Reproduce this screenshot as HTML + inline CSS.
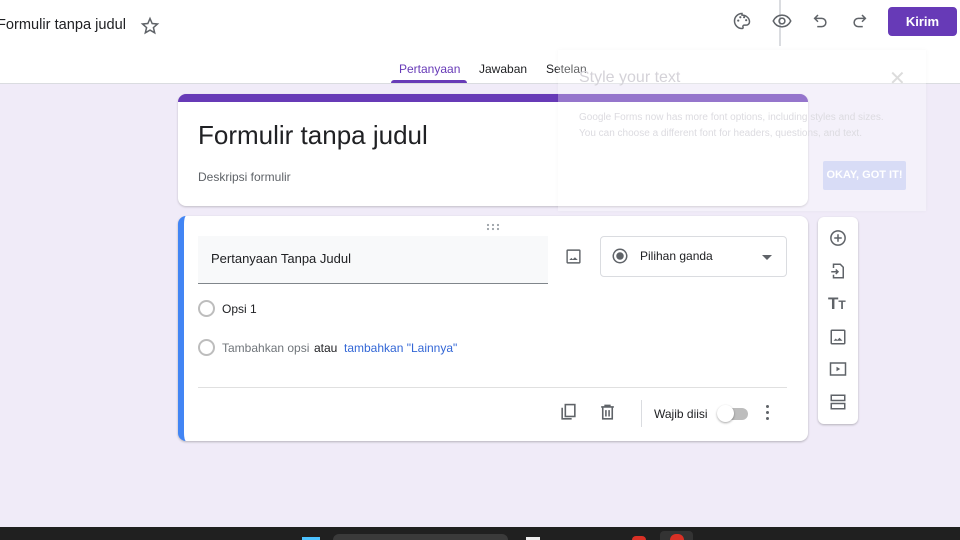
<!DOCTYPE html>
<html><head><meta charset="utf-8"><style>
*{margin:0;padding:0;box-sizing:border-box}
body{width:960px;height:540px;overflow:hidden;background:#f0ebf8;font-family:"Liberation Sans",Arial,sans-serif;position:relative;color:#202124}
.a{position:absolute}
svg{display:block}
</style></head><body>
<div class="a" style="left:0;top:0;width:960px;height:84px;background:#fff;border-bottom:1px solid #dadce0"></div>
<div class="a" style="left:-3px;top:17px;font-size:14.6px;color:#202124">Formulir tanpa judul</div>
<svg class="a" style="left:140px;top:16px" width="20" height="20" viewBox="0 0 24 24"><path d="M12 3l2.6 6 6.4.6-4.9 4.3 1.5 6.3L12 16.9 6.4 20.2l1.5-6.3L3 9.6 9.4 9z" fill="none" stroke="#5f6368" stroke-width="1.8"/></svg>
<div class="a" style="left:779px;top:0;width:2px;height:46px;background:#dadce0"></div>
<svg class="a" style="left:732px;top:11px" width="20" height="20" viewBox="0 0 24 24"><path d="M12 3a9 9 0 000 18c1.2 0 1.6-.8 1.2-1.6-.5-1 .1-2.4 1.5-2.4H17a4 4 0 004-4c0-4.4-4-8-9-8z" fill="none" stroke="#5f6368" stroke-width="1.8"/><circle cx="7.5" cy="11.5" r="1.3" fill="#5f6368"/><circle cx="10" cy="7.5" r="1.3" fill="#5f6368"/><circle cx="14.5" cy="7.5" r="1.3" fill="#5f6368"/><circle cx="17" cy="11" r="1.3" fill="#5f6368"/></svg>
<svg class="a" style="left:771px;top:11px" width="22" height="20" viewBox="0 0 24 24"><path d="M1.5 12C4 7 8 5 12 5s8 2 10.5 7c-2.5 5-6.5 7-10.5 7S4 17 1.5 12z" fill="none" stroke="#5f6368" stroke-width="1.8"/><circle cx="12" cy="12" r="3.5" fill="none" stroke="#5f6368" stroke-width="1.8"/></svg>
<svg class="a" style="left:812px;top:12px" width="18" height="18" viewBox="0 0 24 24"><path d="M8 4L3.5 8.5 8 13M4 8.5h9a5.5 5.5 0 010 11H7" fill="none" stroke="#5f6368" stroke-width="2"/></svg>
<svg class="a" style="left:850px;top:12px" width="18" height="18" viewBox="0 0 24 24"><path d="M16 4l4.5 4.5L16 13M20 8.5h-9a5.5 5.5 0 000 11h6" fill="none" stroke="#5f6368" stroke-width="2"/></svg>
<div class="a" style="left:888px;top:7px;width:69px;height:29px;background:#673ab7;border-radius:4px;color:#fff;font-size:13px;font-weight:bold;text-align:center;line-height:29px">Kirim</div>
<div class="a" style="left:399px;top:62px;font-size:12px;color:#673ab7">Pertanyaan</div>
<div class="a" style="left:391px;top:80px;width:76px;height:3px;background:#673ab7;border-radius:3px 3px 0 0"></div>
<div class="a" style="left:479px;top:62px;font-size:12px;color:#202124">Jawaban</div>
<div class="a" style="left:546px;top:62px;font-size:12px;color:#202124">Setelan</div>

<div class="a" style="left:178px;top:94px;width:630px;height:112px;background:#fff;border-radius:8px;border-top:8px solid #673ab7;box-shadow:0 1px 2px rgba(0,0,0,.2)"></div>
<div class="a" style="left:198px;top:120px;font-size:26px;color:#202124">Formulir tanpa judul</div>
<div class="a" style="left:198px;top:170px;font-size:12px;color:#5f6368">Deskripsi formulir</div>

<div class="a" style="left:178px;top:216px;width:630px;height:225px;background:#fff;border-radius:8px;box-shadow:0 1px 2px rgba(0,0,0,.25);border-left:6px solid #4285f4"></div>
<svg class="a" style="left:486px;top:223px" width="14" height="8"><g fill="#9aa0a6"><circle cx="2" cy="2" r="1.1"/><circle cx="7" cy="2" r="1.1"/><circle cx="12" cy="2" r="1.1"/><circle cx="2" cy="6" r="1.1"/><circle cx="7" cy="6" r="1.1"/><circle cx="12" cy="6" r="1.1"/></g></svg>
<div class="a" style="left:198px;top:236px;width:350px;height:48px;background:#f8f9fa;border-bottom:1px solid #80868b"></div>
<div class="a" style="left:211px;top:251px;font-size:13px;color:#202124">Pertanyaan Tanpa Judul</div>
<svg class="a" style="left:565px;top:248px" width="17" height="17" viewBox="0 0 24 24"><rect x="3" y="3" width="18" height="18" rx="1" fill="none" stroke="#5f6368" stroke-width="2"/><path d="M6 17l3-3 2 2 3-3 4 4z" fill="#5f6368"/></svg>
<div class="a" style="left:600px;top:236px;width:187px;height:41px;border:1px solid #dadce0;border-radius:4px"></div>
<svg class="a" style="left:611px;top:247px" width="18" height="18" viewBox="0 0 24 24"><circle cx="12" cy="12" r="9" fill="none" stroke="#5f6368" stroke-width="2"/><circle cx="12" cy="12" r="5" fill="#5f6368"/></svg>
<div class="a" style="left:640px;top:249px;font-size:12px;color:#202124">Pilihan ganda</div>
<div class="a" style="left:762px;top:255px;width:0;height:0;border-left:5px solid transparent;border-right:5px solid transparent;border-top:5px solid #5f6368"></div>

<div class="a" style="left:198px;top:300px;width:17px;height:17px;border:2px solid #bdbdbd;border-radius:50%"></div>
<div class="a" style="left:222px;top:302px;font-size:12px;color:#202124">Opsi 1</div>
<div class="a" style="left:198px;top:339px;width:17px;height:17px;border:2px solid #bdbdbd;border-radius:50%"></div>
<div class="a" style="left:222px;top:341px;font-size:12px;color:#70757a">Tambahkan opsi</div>
<div class="a" style="left:314px;top:341px;font-size:12px;color:#202124">atau</div>
<div class="a" style="left:344px;top:341px;font-size:12px;color:#3367d6">tambahkan "Lainnya"</div>

<div class="a" style="left:198px;top:387px;width:589px;height:1px;background:#e0e0e0"></div>
<svg class="a" style="left:559px;top:403px" width="19" height="19" viewBox="0 0 24 24"><path d="M4 6v14h12" fill="none" stroke="#5f6368" stroke-width="2"/><rect x="8" y="2" width="12" height="15" fill="none" stroke="#5f6368" stroke-width="2"/></svg>
<svg class="a" style="left:598px;top:403px" width="19" height="19" viewBox="0 0 24 24"><path d="M4 5h16M9 5V3h6v2M6 5v15h12V5M10 9v8M14 9v8" fill="none" stroke="#5f6368" stroke-width="2"/></svg>
<div class="a" style="left:641px;top:400px;width:1px;height:27px;background:#dadce0"></div>
<div class="a" style="left:654px;top:407px;font-size:12px;color:#202124">Wajib diisi</div>
<div class="a" style="left:722px;top:408px;width:26px;height:12px;border-radius:6px;background:#bdbdbd"></div>
<div class="a" style="left:717px;top:405px;width:17px;height:17px;border-radius:50%;background:#fff;box-shadow:0 1px 2px rgba(0,0,0,.35)"></div>
<div class="a" style="left:766px;top:405px;width:3px;height:3px;border-radius:50%;background:#5f6368;box-shadow:0 6px #5f6368,0 12px #5f6368"></div>

<div class="a" style="left:818px;top:217px;width:40px;height:207px;background:#fff;border-radius:6px;box-shadow:0 1px 2px rgba(0,0,0,.25)"></div>
<svg class="a" style="left:829px;top:229px" width="18" height="18" viewBox="0 0 24 24"><circle cx="12" cy="12" r="9.5" fill="none" stroke="#5f6368" stroke-width="2"/><path d="M12 7v10M7 12h10" stroke="#5f6368" stroke-width="2"/></svg>
<svg class="a" style="left:829px;top:262px" width="18" height="18" viewBox="0 0 24 24"><path d="M6 8V3h9l4 4v14H6v-4" fill="none" stroke="#5f6368" stroke-width="2"/><path d="M3 13h9M9 10l3 3-3 3" fill="none" stroke="#5f6368" stroke-width="2"/></svg>
<div class="a" style="left:828px;top:294px;font-size:17px;font-weight:bold;color:#5f6368">T<span style="font-size:12px">T</span></div>
<svg class="a" style="left:829px;top:328px" width="18" height="18" viewBox="0 0 24 24"><rect x="3" y="3" width="18" height="18" rx="1" fill="none" stroke="#5f6368" stroke-width="2"/><path d="M6 17l3-3 2 2 3-3 4 4z" fill="#5f6368"/></svg>
<svg class="a" style="left:829px;top:360px" width="18" height="18" viewBox="0 0 24 24"><rect x="2" y="4" width="20" height="16" fill="none" stroke="#5f6368" stroke-width="2"/><path d="M10 9v6l5-3z" fill="#5f6368"/></svg>
<svg class="a" style="left:829px;top:393px" width="18" height="18" viewBox="0 0 24 24"><rect x="3" y="3" width="18" height="7" fill="none" stroke="#5f6368" stroke-width="2"/><rect x="3" y="14" width="18" height="7" fill="none" stroke="#5f6368" stroke-width="2"/></svg>

<div class="a" style="left:558px;top:50px;width:368px;height:161px;background:rgba(255,255,255,.3);box-shadow:0 0 4px rgba(0,0,0,.04)"></div>
<div class="a" style="left:579px;top:69px;font-size:16px;color:#d4d2d8">Style your text</div>
<div class="a" style="left:889px;top:66px;font-size:20px;color:#dcdcdc">✕</div>
<div class="a" style="left:579px;top:110px;font-size:10px;line-height:16px;color:#dcdbe0">Google Forms now has more font options, including styles and sizes.<br>You can choose a different font for headers, questions, and text.</div>
<div class="a" style="left:823px;top:161px;width:83px;height:29px;background:#d8dcf6;border-radius:2px;color:#fff;font-size:11px;font-weight:bold;text-align:center;line-height:29px">OKAY, GOT IT!</div>

<div class="a" style="left:0;top:527px;width:960px;height:13px;background:#202020"></div>
<div class="a" style="left:302px;top:537px;width:18px;height:3px;background:#4cc2ff"></div>
<div class="a" style="left:333px;top:534px;width:175px;height:6px;border-radius:6px 6px 0 0;background:#3a3a3a"></div>
<div class="a" style="left:526px;top:537px;width:14px;height:3px;background:#eee"></div>
<div class="a" style="left:632px;top:536px;width:14px;height:4px;border-radius:7px 7px 0 0;background:#d93025"></div>
<div class="a" style="left:660px;top:531px;width:33px;height:9px;border-radius:4px 4px 0 0;background:#333"></div>
<div class="a" style="left:670px;top:534px;width:14px;height:6px;border-radius:7px 7px 0 0;background:#d93025"></div>
</body></html>
